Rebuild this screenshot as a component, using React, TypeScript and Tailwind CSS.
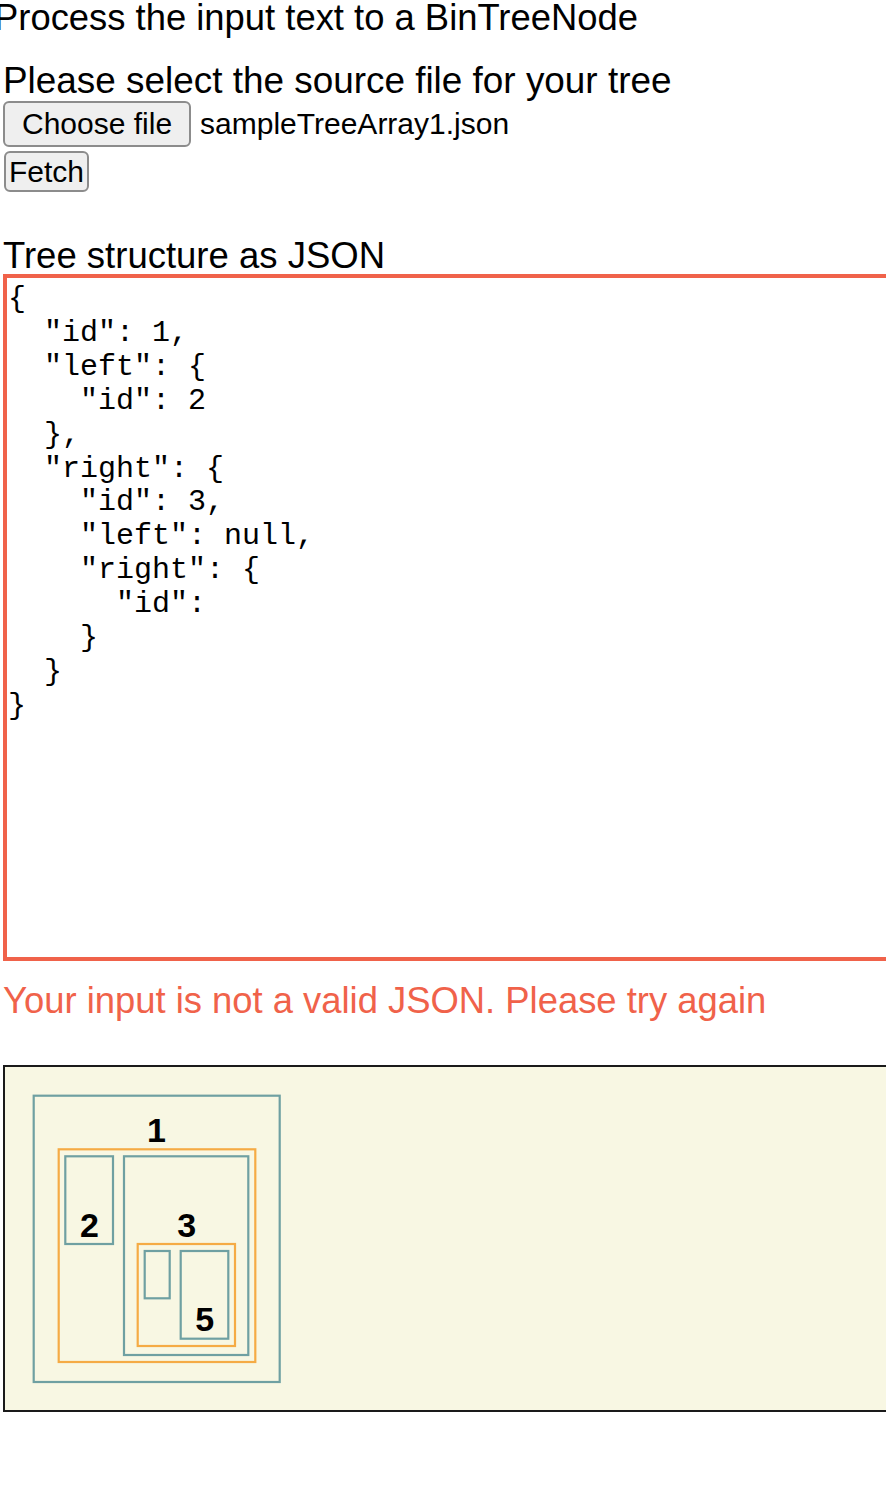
import React from "react";

const json = `{
  "id": 1,
  "left": {
    "id": 2
  },
  "right": {
    "id": 3,
    "left": null,
    "right": {
      "id": 
    }
  }
}`;

function TreeDiagram() {
  const teal = "#6fa0a2";
  const orange = "#f5ab45";
  const rect = (x1: number, y1: number, x2: number, y2: number, c: string) => (
    <rect x={x1} y={y1} width={x2 - x1} height={y2 - y1} fill="none" stroke={c} strokeWidth={2.2} />
  );
  const label = (x: number, y: number, t: string) => (
    <text x={x} y={y} textAnchor="middle" fontFamily="'Liberation Sans', Arial, sans-serif" fontWeight="700" fontSize="34" fill="#000">
      {t}
    </text>
  );
  return (
    <svg width="881" height="343" viewBox="5 1067 881 343" className="block">
      {rect(33.7, 1095.7, 279.7, 1382, teal)}
      {label(156.5, 1142, "1")}
      {rect(58.7, 1149.3, 255.3, 1362, orange)}
      {rect(65.3, 1156.3, 113, 1244, teal)}
      {label(89.5, 1237, "2")}
      {rect(124, 1156.3, 248.3, 1355, teal)}
      {label(186.7, 1237, "3")}
      {rect(137.7, 1244, 235, 1346, orange)}
      {rect(144.7, 1251, 169.7, 1298.3, teal)}
      {rect(180.7, 1251, 228.3, 1338.7, teal)}
      {label(204.7, 1331, "5")}
    </svg>
  );
}

export default function App() {
  return (
    <div className="w-[886px] h-[1488px] overflow-hidden bg-white text-black font-['Liberation_Sans',Arial,sans-serif]">
      <h1 className="-ml-[6px] -mt-[3px] text-[36.4px] leading-[41px] font-normal whitespace-nowrap">
        Process the input text to a BinTreeNode
      </h1>
      <div className="pl-[3px] w-[1000px]">
        <div className="mt-[22px] text-[36.9px] leading-[41px] whitespace-nowrap">
          Please select the source file for your tree
        </div>
        <div className="flex items-center gap-[9px]">
          <button className="h-[46px] px-[17px] text-[30px] leading-none bg-[#efefef] border-2 border-[#8c8c8c] rounded-[6px] text-black">
            Choose file
          </button>
          <span className="text-[30px] leading-none">sampleTreeArray1.json</span>
        </div>
        <button className="mt-[4px] ml-[1px] h-[41px] px-[3px] text-[30px] leading-none bg-[#efefef] border-2 border-[#8c8c8c] rounded-[6px] text-black">
          Fetch
        </button>
        <div className="mt-[46px] text-[36.5px] leading-[36px] whitespace-nowrap">Tree structure as JSON</div>
        <div className="h-[687px] border-4 border-[#f0624a] pt-[5px] pl-[1px]">
          <pre className="font-['Liberation_Mono','Courier_New',monospace] text-[30px] leading-[33.9px] text-black m-0">
            {json}
          </pre>
        </div>
        <div className="mt-[19px] text-[36.4px] leading-[41px] text-[#f0624a] whitespace-nowrap">
          Your input is not a valid JSON. Please try again
        </div>
        <div className="mt-[44px] h-[347px] border-2 border-[#1a1a1a] bg-[#f8f7e3]">
          <TreeDiagram />
        </div>
      </div>
    </div>
  );
}
